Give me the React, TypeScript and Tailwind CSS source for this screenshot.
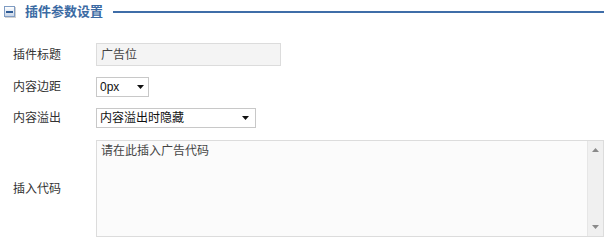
import React from "react";

function Caret() {
  return (
    <svg width="7" height="4" viewBox="0 0 7 4" className="block">
      <path d="M0 0 H7 L3.5 4 Z" fill="#111" />
    </svg>
  );
}

function Row({ label, children, h, className = "" }: { label: string; children: React.ReactNode; h: string; className?: string }) {
  return (
    <div className={`flex items-center ${className}`}>
      <div className="w-[96px] shrink-0 pl-[13px] text-[12px] text-[#333] leading-none">{label}</div>
      <div className={`flex items-center ${h}`}>{children}</div>
    </div>
  );
}

export default function App() {
  return (
    <div
      className="w-[608px] h-[243px] bg-white overflow-hidden"
      style={{ fontFamily: '"Liberation Sans", "Noto Sans CJK SC", sans-serif' }}
    >
      <div className="flex items-center h-[23px] pl-[4px] pr-[4px]">
        <div className="w-[11px] h-[11px] border border-[#7f9cc3] bg-gradient-to-b from-[#ffffff] to-[#c9d6e8] flex items-center justify-center shadow-[1px_1px_0_#d0d0d0]">
          <div className="w-[7px] h-[2px] bg-[#2f5b94]" />
        </div>
        <div className="ml-[10px] text-[13px] font-bold text-[#3b6aa3] leading-none">插件参数设置</div>
        <div className="ml-[10px] flex-1 h-[2px] bg-[#3f6da8]" />
      </div>

      <Row label="插件标题" h="h-[23px]" className="mt-[20px]">
        <div className="w-[185px] h-[23px] border border-[#dcdcdc] bg-[#f4f4f4] flex items-center pl-[4px] text-[12px] text-[#444]">
          广告位
        </div>
      </Row>

      <Row label="内容边距" h="h-[20px]" className="mt-[11px]">
        <div className="w-[53px] h-[20px] border border-[#c8c8c8] bg-white flex items-center justify-between pl-[3px] pr-[4px] text-[12px] text-[#111]">
          <span>0px</span>
          <Caret />
        </div>
      </Row>

      <Row label="内容溢出" h="h-[20px]" className="mt-[11px]">
        <div className="w-[160px] h-[20px] border border-[#c8c8c8] bg-white flex items-center justify-between pl-[3px] pr-[6px] text-[12px] text-[#111]">
          <span>内容溢出时隐藏</span>
          <Caret />
        </div>
      </Row>

      <Row label="插入代码" h="h-[97px]" className="mt-[12px]">
        <div className="w-[508px] h-[97px] border border-[#dcdcdc] bg-[#fbfbfb] flex">
          <div className="flex-1 pl-[4px] pt-[3px] text-[12px] text-[#444] leading-[15px]">请在此插入广告代码</div>
          <div className="w-[16px] h-full bg-[#f0f0f0] border-l border-[#e6e6e6] flex flex-col items-center justify-between py-[7px]">
            <svg width="7" height="4" viewBox="0 0 7 4"><path d="M0 4 H7 L3.5 0 Z" fill="#8a8a8a" /></svg>
            <svg width="7" height="4" viewBox="0 0 7 4"><path d="M0 0 H7 L3.5 4 Z" fill="#8a8a8a" /></svg>
          </div>
        </div>
      </Row>
    </div>
  );
}
